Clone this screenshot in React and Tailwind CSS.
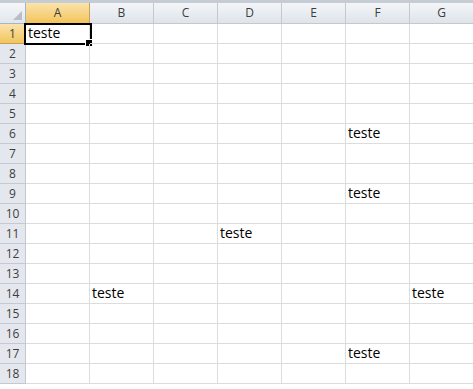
import React from 'react';

const columns = ['A', 'B', 'C', 'D', 'E', 'F', 'G'];
const rowCount = 18;

// cells holding text, keyed by "row-col"
const values = {
  '1-A': 'teste',
  '6-F': 'teste',
  '9-F': 'teste',
  '11-D': 'teste',
  '14-B': 'teste',
  '14-G': 'teste',
  '17-F': 'teste',
};

const App = () => {
  const rows = Array.from({ length: rowCount }, (_, i) => i + 1);

  return (
    <div
      className="w-[473px] h-[389px] overflow-hidden bg-white border-t-[3px] border-[#c6ccd4]"
      style={{ fontFamily: '"Open Sans", "Liberation Sans", sans-serif' }}
    >
      <div className="grid grid-cols-[26px_repeat(7,64px)]">
        {/* Corner */}
        <div className="h-[21px] border-r border-b border-[#9eb6ce] bg-gradient-to-b from-[#f4f6f8] to-[#e2e6ec] flex items-end justify-end p-[3px]">
          <div className="w-0 h-0 border-l-[9px] border-l-transparent border-b-[9px] border-b-[#b8bec7]" />
        </div>

        {/* Column headers */}
        {columns.map((c) => (
          <div
            key={c}
            className={
              c === 'A'
                ? 'h-[21px] border-r border-b border-[#c5a25c] bg-gradient-to-b from-[#fbe3ab] to-[#f2c458] flex items-center justify-center text-[12px] text-[#3d3d3d]'
                : 'h-[21px] border-r border-b border-[#c3c9d1] bg-gradient-to-b from-[#f3f5f8] to-[#dfe4ea] flex items-center justify-center text-[12px] text-[#3d3d3d]'
            }
          >
            {c}
          </div>
        ))}

        {/* Rows */}
        {rows.map((r) => (
          <React.Fragment key={r}>
            <div
              className={
                r === 1
                  ? 'h-[20px] border-r border-b border-[#c5a25c] bg-gradient-to-b from-[#fbe3ab] to-[#f2c458] flex items-center justify-center text-[12px] text-[#3d3d3d]'
                  : 'h-[20px] border-r border-b border-[#c3c9d1] bg-[#e4e8ee] flex items-center justify-center text-[12px] text-[#3d3d3d]'
              }
            >
              {r}
            </div>
            {columns.map((c) => {
              const key = `${r}-${c}`;
              const selected = key === '1-A';
              return (
                <div
                  key={key}
                  className="relative h-[20px] border-r border-b border-[#dadcdd] flex items-end pl-[2px] pb-[1px] text-[14px] leading-[18px] text-black whitespace-nowrap"
                >
                  {values[key]}
                  {selected && (
                    <>
                      <div className="absolute -left-[2px] -top-[1px] w-[68px] h-[22px] border-2 border-black pointer-events-none" />
                      <div className="absolute left-[60px] top-[16px] w-[6px] h-[6px] bg-black outline outline-1 outline-white" />
                    </>
                  )}
                </div>
              );
            })}
          </React.Fragment>
        ))}
      </div>
    </div>
  );
};

export default App;
